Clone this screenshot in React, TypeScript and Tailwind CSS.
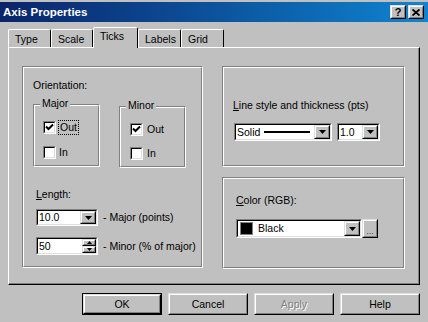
import React from 'react';

const Raised = ({ className = '', children }: { className?: string; children?: React.ReactNode }) => (
  <div className={`border border-t-[#dfdfdf] border-l-[#dfdfdf] border-r-black border-b-black ${className}`}>
    <div className="w-full h-full border border-t-white border-l-white border-r-[#808080] border-b-[#808080] bg-[#c0c0c0] flex items-center justify-center">
      {children}
    </div>
  </div>
);

const Sunken = ({ className = '', children }: { className?: string; children?: React.ReactNode }) => (
  <div className={`border border-t-[#808080] border-l-[#808080] border-r-white border-b-white ${className}`}>
    <div className="w-full h-full border border-t-black border-l-black border-r-[#dfdfdf] border-b-[#dfdfdf] bg-white flex items-center">
      {children}
    </div>
  </div>
);

const DownArrow = () => (
  <svg width="7" height="4" viewBox="0 0 7 4">
    <polygon points="0,0 7,0 3.5,4" fill="black" />
  </svg>
);

const DropButton = () => (
  <Raised className="w-[16px] h-full shrink-0">
    <DownArrow />
  </Raised>
);

const Check = ({ checked }: { checked?: boolean }) => (
  <Sunken className="w-[13px] h-[13px] shrink-0">
    {checked && (
      <svg width="9" height="9" viewBox="0 0 9 9" className="mx-auto">
        <path d="M1 3.5 L3.5 6 L8 1.5" stroke="black" strokeWidth="2" fill="none" />
      </svg>
    )}
  </Sunken>
);

// etched group frame, label sits on the top line
const Group = ({ label, className = '', children }: { label?: React.ReactNode; className?: string; children?: React.ReactNode }) => (
  <div className={`relative border border-t-[#808080] border-l-[#808080] border-r-white border-b-white ${className}`}>
    <div className="w-full h-full border border-t-white border-l-white border-r-[#808080] border-b-[#808080]">
      {children}
    </div>
    {label && (
      <span className="absolute -top-[8px] left-[6px] bg-[#c0c0c0] px-[2px] leading-[13px]">{label}</span>
    )}
  </div>
);

const Tab = ({ label, w, selected }: { label: string; w: string; selected?: boolean }) =>
  selected ? (
    <div className={`${w} h-[21px] -mb-[1px] z-10 bg-[#c0c0c0] border-l border-t border-r border-l-white border-t-white border-r-black rounded-t-[2px] pl-[6px] pt-[2px] leading-[13px]`}>
      {label}
    </div>
  ) : (
    <div className={`${w} h-[18px] bg-[#c0c0c0] border-l border-t border-r border-l-white border-t-white border-r-black rounded-t-[2px] pl-[6px] pt-[3px] leading-[13px]`}>
      {label}
    </div>
  );

const Button = ({ label, isDefault, disabled }: { label: string; isDefault?: boolean; disabled?: boolean }) => (
  <div className={`w-[80px] h-[22px] ${isDefault ? 'border border-black' : ''}`}>
    <Raised className="w-full h-full">
      <span className={disabled ? 'text-[#808080] [text-shadow:1px_1px_0_#fff]' : ''}>{label}</span>
    </Raised>
  </div>
);

export default function App() {
  return (
    <div className="w-[428px] h-[322px] bg-[#c0c0c0] overflow-hidden font-['Liberation_Sans',Arial,sans-serif] text-[10.5px] text-black leading-[13px]">
      {/* title bar */}
      <div className="mt-[2px] h-[20px] flex items-center bg-gradient-to-r from-[#0a246a] to-[#1084d0] pl-[3px] pr-[4px]">
        <span className="text-white font-bold text-[11.5px]">Axis Properties</span>
        <div className="ml-auto flex gap-[2px]">
          <Raised className="w-[16px] h-[14px]">
            <span className="font-bold text-[11px] leading-[11px]">?</span>
          </Raised>
          <Raised className="w-[16px] h-[14px]">
            <svg width="8" height="7" viewBox="0 0 8 7">
              <path d="M0.5 0.5 L7.5 6.5 M7.5 0.5 L0.5 6.5" stroke="black" strokeWidth="1.8" />
            </svg>
          </Raised>
        </div>
      </div>

      {/* tabs */}
      <div className="mt-[5px] ml-[8px] h-[20px] flex items-end">
        <Tab label="Type" w="w-[43px]" />
        <Tab label="Scale" w="w-[42px]" />
        <Tab label="Ticks" w="w-[45px]" selected />
        <Tab label="Labels" w="w-[43px]" />
        <Tab label="Grid" w="w-[43px]" />
      </div>

      {/* tab panel */}
      <div className="ml-[8px] w-[412px] h-[238px] border border-t-white border-l-white border-r-black border-b-black">
        <div className="w-full h-full border-r border-b border-r-[#808080] border-b-[#808080] flex pl-[13px] pt-[18px]">
          {/* left: orientation + length */}
          <Group className="w-[181px] h-[202px]">
            <div className="pl-[9px] pt-[11px]">
              <div>Orientation:</div>
              <div className="flex items-start">
                <Group label="Major" className="mt-[12px] w-[67px] h-[63px]">
                  <div className="pl-[8px] pt-[14px] flex flex-col gap-[11px]">
                    <div className="flex items-center">
                      <Check checked />
                      <span className="ml-[2px] px-[1px] border border-dotted border-black">Out</span>
                    </div>
                    <div className="flex items-center">
                      <Check />
                      <span className="ml-[3px]">In</span>
                    </div>
                  </div>
                </Group>
                <Group label="Minor" className="mt-[14px] ml-[19px] w-[67px] h-[62px]">
                  <div className="pl-[9px] pt-[15px] flex flex-col gap-[11px]">
                    <div className="flex items-center">
                      <Check checked />
                      <span className="ml-[4px]">Out</span>
                    </div>
                    <div className="flex items-center">
                      <Check />
                      <span className="ml-[4px]">In</span>
                    </div>
                  </div>
                </Group>
              </div>
              <div className="pl-[3px] mt-[20px]">
                <div>
                  <span className="underline">L</span>ength:
                </div>
                <div className="mt-[8px] flex items-center">
                  <Sunken className="w-[62px] h-[17px]">
                    <span className="pl-[1px] flex-1">10.0</span>
                    <DropButton />
                  </Sunken>
                  <span className="ml-[5px]">- Major (points)</span>
                </div>
                <div className="mt-[11px] flex items-center">
                  <Sunken className="w-[62px] h-[18px]">
                    <span className="pl-[1px] flex-1">50</span>
                    <div className="h-full flex flex-col">
                      <Raised className="w-[14px] h-[7px]">
                        <svg width="5" height="3" viewBox="0 0 5 3">
                          <polygon points="2.5,0 5,3 0,3" fill="black" />
                        </svg>
                      </Raised>
                      <Raised className="w-[14px] h-[7px]">
                        <svg width="5" height="3" viewBox="0 0 5 3">
                          <polygon points="0,0 5,0 2.5,3" fill="black" />
                        </svg>
                      </Raised>
                    </div>
                  </Sunken>
                  <span className="ml-[5px]">- Minor (% of major)</span>
                </div>
              </div>
            </div>
          </Group>

          {/* right column */}
          <div className="ml-[19px] w-[183px] flex flex-col gap-[10px]">
            <Group className="w-[183px] h-[101px]">
              <div className="pl-[9px] pt-[31px]">
                <div>
                  <span className="underline">L</span>ine style and thickness (pts)
                </div>
                <div className="mt-[11px] flex">
                  <Sunken className="w-[98px] h-[18px] ml-[1px]">
                    <span className="pl-[1px]">Solid</span>
                    <div className="flex-1 mx-[4px] h-[2px] bg-black" />
                    <DropButton />
                  </Sunken>
                  <Sunken className="ml-[5px] w-[43px] h-[18px]">
                    <span className="pl-[1px] flex-1">1.0</span>
                    <DropButton />
                  </Sunken>
                </div>
              </div>
            </Group>
            <Group className="w-[183px] h-[92px]">
              <div className="pl-[12px] pt-[15px]">
                <div>
                  <span className="underline">C</span>olor (RGB):
                </div>
                <div className="mt-[12px] flex">
                  <Sunken className="w-[126px] h-[19px]">
                    <div className="ml-[2px] w-[13px] h-[13px] bg-black border border-[#808080]" />
                    <span className="ml-[5px] flex-1">Black</span>
                    <DropButton />
                  </Sunken>
                  <Raised className="w-[16px] h-[19px]">
                    <span className="text-[9px] leading-[9px] mt-[6px] text-[#404040]">...</span>
                  </Raised>
                </div>
              </div>
            </Group>
          </div>
        </div>
      </div>

      {/* dialog buttons */}
      <div className="mt-[8px] pr-[8px] flex justify-end gap-[6px]">
        <Button label="OK" isDefault />
        <Button label="Cancel" />
        <Button label="Apply" disabled />
        <Button label="Help" />
      </div>
    </div>
  );
}
